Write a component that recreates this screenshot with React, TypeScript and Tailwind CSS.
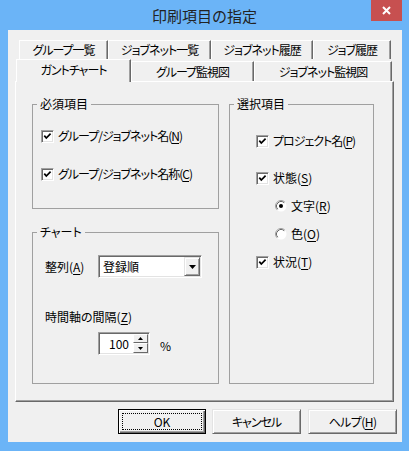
import React from "react";

function U({ c }: { c: string }) {
  return <span className="underline decoration-1 underline-offset-[2px]">{c}</span>;
}

function CheckBox() {
  return (
    <span className="w-[13px] h-[13px] shrink-0 bg-white border border-t-[#a0a0a0] border-l-[#a0a0a0] border-r-white border-b-white shadow-[inset_1px_1px_0_#696969,inset_-1px_-1px_0_#e3e3e3] flex items-center justify-center">
      <svg width="11" height="11" viewBox="0 0 11 11">
        <path d="M2.3 4.6 L4.3 7 L8.6 2.6" fill="none" stroke="#000" strokeWidth="1.7" />
      </svg>
    </span>
  );
}

function Radio({ on }: { on: boolean }) {
  return (
    <svg width="12" height="12" viewBox="0 0 12 12" className="shrink-0">
      <circle cx="6" cy="6" r="5.5" fill="#fff" />
      <path d="M2.11 9.89 A5.5 5.5 0 0 1 9.89 2.11" fill="none" stroke="#a0a0a0" strokeWidth="1" />
      <path d="M2.82 9.18 A4.5 4.5 0 0 1 9.18 2.82" fill="none" stroke="#696969" strokeWidth="1" />
      {on && <circle cx="6" cy="6" r="2" fill="#000" />}
    </svg>
  );
}

function Group({
  title,
  className,
  children,
}: {
  title: string;
  className: string;
  children?: React.ReactNode;
}) {
  return (
    <div className={"relative border border-[#a0a0a0] " + className}>
      <span className="absolute left-[4px] top-[-9px] px-[3px] bg-[#f0f0f0] leading-[16px]">{title}</span>
      {children}
    </div>
  );
}

function CheckRow({
  children,
  className,
  tight,
}: {
  children: React.ReactNode;
  className?: string;
  tight?: boolean;
}) {
  return (
    <div className={"flex items-center gap-[4px] h-[16px] leading-[16px] " + (className ?? "")}>
      <CheckBox />
      <span className={tight ? "tracking-[-1px]" : ""}>{children}</span>
    </div>
  );
}

export default function App() {
  return (
    <div className="w-[409px] h-[451px] bg-[#6bb4f7] flex flex-col font-['Noto_Sans_CJK_JP',sans-serif] text-[12px] text-black [font-feature-settings:'palt']">
      {/* title bar */}
      <div className="h-[30px] flex shrink-0">
        <div className="w-[38px]" />
        <div className="flex-1 text-center text-[15px] leading-[31px] text-[#222] [font-feature-settings:normal]">
          印刷項目の指定
        </div>
        <div className="w-[31px] h-[21px] mr-[7px] bg-[#c75050] flex items-center justify-center">
          <svg width="9" height="9" viewBox="0 0 9 9">
            <path d="M1 1 L8 8 M8 1 L1 8" stroke="#fff" strokeWidth="2" />
          </svg>
        </div>
      </div>

      {/* client */}
      <div className="ml-[8px] mr-[7px] h-[412px] bg-[#f0f0f0] flex flex-col pt-[10px]">
        <div className="ml-[7px] mr-[8px] flex flex-col">
          {/* back tab row */}
          <div className="flex h-[19px] ml-[4px] tracking-[-1px]">
            <div className="w-[89px] h-[19px] flex items-center justify-center border-l border-t border-white border-r border-r-[#696969] shadow-[inset_-1px_0_0_#a0a0a0]">
              グループ一覧
            </div>
            <div className="w-[103px] h-[19px] flex items-center justify-center border-l border-t border-white border-r border-r-[#696969] shadow-[inset_-1px_0_0_#a0a0a0]">
              ジョブネット一覧
            </div>
            <div className="w-[102px] h-[19px] flex items-center justify-center border-l border-t border-white border-r border-r-[#696969] shadow-[inset_-1px_0_0_#a0a0a0]">
              ジョブネット履歴
            </div>
            <div className="w-[78px] h-[19px] flex items-center justify-center border-l border-t border-white border-r border-r-[#696969] shadow-[inset_-1px_0_0_#a0a0a0]">
              ジョブ履歴
            </div>
          </div>
          {/* front tab row */}
          <div className="flex h-[22px] items-start ml-px relative z-10 tracking-[-1px]">
            <div className="w-[115px] h-[23px] bg-[#f0f0f0] flex items-center justify-center pb-[3px] border-l border-t border-white border-r border-r-[#696969] shadow-[inset_-1px_0_0_#a0a0a0]">
              ガントチャート
            </div>
            <div className="w-[123px] h-[20px] mt-[2px] flex items-center justify-center border-l border-t border-white border-r border-r-[#696969] shadow-[inset_-1px_0_0_#a0a0a0]">
              グループ監視図
            </div>
            <div className="w-[138px] h-[20px] mt-[2px] flex items-center justify-center border-l border-t border-white border-r border-r-[#696969] shadow-[inset_-1px_0_0_#a0a0a0]">
              ジョブネット監視図
            </div>
          </div>
          {/* panel */}
          <div className="h-[321px] border border-t-white border-l-white border-r-[#696969] border-b-[#696969] shadow-[inset_-1px_-1px_0_#a0a0a0] flex gap-[10px] pl-[16px] pt-[22px]">
            <div className="w-[187px] flex flex-col gap-[23px]">
              <Group title="必須項目" className="h-[105px] pl-[8px] pt-[23px] flex flex-col gap-[22px]">
                <CheckRow tight>
                  グループ/ジョブネット名(<U c="N" />)
                </CheckRow>
                <CheckRow tight>
                  グループ/ジョブネット名称(<U c="C" />)
                </CheckRow>
              </Group>
              <Group title="チャート" className="h-[152px] pl-[12px] pt-[22px] flex flex-col">
                <div className="flex items-center h-[23px]">
                  <span className="w-[53px] leading-[16px]">
                    整列(<U c="A" />)
                  </span>
                  <div className="w-[104px] h-[23px] bg-white border border-t-[#a0a0a0] border-l-[#a0a0a0] border-r-white border-b-white shadow-[inset_1px_1px_0_#696969,inset_-1px_-1px_0_#e3e3e3] flex items-center p-px">
                    <span className="flex-1 pl-[3px] leading-[16px]">登録順</span>
                    <div className="w-[16px] h-[19px] bg-[#f0f0f0] border border-t-[#e3e3e3] border-l-[#e3e3e3] border-r-[#696969] border-b-[#696969] shadow-[inset_1px_1px_0_#fff,inset_-1px_-1px_0_#a0a0a0] flex items-center justify-center">
                      <svg width="7" height="4" viewBox="0 0 7 4">
                        <path d="M0 0 H7 L3.5 4 Z" fill="#000" />
                      </svg>
                    </div>
                  </div>
                </div>
                <div className="mt-[31px] h-[16px] leading-[16px]">
                  時間軸の間隔(<U c="Z" />)
                </div>
                <div className="mt-[7px] ml-[53px] flex items-center">
                  <div className="w-[52px] h-[23px] bg-white border border-t-[#a0a0a0] border-l-[#a0a0a0] border-r-white border-b-white shadow-[inset_1px_1px_0_#696969,inset_-1px_-1px_0_#e3e3e3] flex items-stretch p-px">
                    <span className="flex-1 text-right pr-[4px] leading-[19px] [font-feature-settings:normal]">100</span>
                    <div className="w-[15px] flex flex-col">
                      <div className="h-[9px] bg-[#f0f0f0] border border-t-white border-l-white border-r-[#696969] border-b-[#696969] flex items-center justify-center">
                        <svg width="5" height="3" viewBox="0 0 5 3">
                          <path d="M0 3 H5 L2.5 0 Z" fill="#000" />
                        </svg>
                      </div>
                      <div className="h-[10px] bg-[#f0f0f0] border border-t-white border-l-white border-r-[#696969] border-b-[#696969] flex items-center justify-center">
                        <svg width="5" height="3" viewBox="0 0 5 3">
                          <path d="M0 0 H5 L2.5 3 Z" fill="#000" />
                        </svg>
                      </div>
                    </div>
                  </div>
                  <span className="ml-[10px] pt-[4px] leading-[16px]">%</span>
                </div>
              </Group>
            </div>
            <Group title="選択項目" className="w-[145px] h-[280px] pl-[26px] pt-[28px] flex flex-col">
              <CheckRow tight>
                プロジェクト名(<U c="P" />)
              </CheckRow>
              <CheckRow className="mt-[21px]">
                状態(<U c="S" />)
              </CheckRow>
              <div className="mt-[12px] ml-[19px] flex items-center gap-[4px] h-[16px] leading-[16px]">
                <Radio on={true} />
                <span>
                  文字(<U c="R" />)
                </span>
              </div>
              <div className="mt-[12px] ml-[19px] flex items-center gap-[4px] h-[16px] leading-[16px]">
                <Radio on={false} />
                <span>
                  色(<U c="O" />)
                </span>
              </div>
              <CheckRow className="mt-[12px]">
                状況(<U c="T" />)
              </CheckRow>
            </Group>
          </div>
        </div>

        {/* buttons */}
        <div className="flex justify-end mt-[7px] pr-[5px]">
          <div className="relative w-[88px] h-[25px] bg-[#f0f0f0] border border-black shadow-[inset_1px_1px_0_#fff,inset_-1px_-1px_0_#696969,inset_-2px_-2px_0_#a0a0a0] flex items-center justify-center outline outline-1 outline-dotted outline-black outline-offset-[-5px]">
            OK
          </div>
          <div className="ml-[6px] w-[89px] h-[25px] bg-[#f0f0f0] border border-t-[#e3e3e3] border-l-[#e3e3e3] border-r-[#696969] border-b-[#696969] shadow-[inset_1px_1px_0_#fff,inset_-1px_-1px_0_#a0a0a0] flex items-center justify-center tracking-[-1px]">
            キャンセル
          </div>
          <div className="ml-[7px] w-[89px] h-[25px] bg-[#f0f0f0] border border-t-[#e3e3e3] border-l-[#e3e3e3] border-r-[#696969] border-b-[#696969] shadow-[inset_1px_1px_0_#fff,inset_-1px_-1px_0_#a0a0a0] flex items-center justify-center tracking-[-0.6px]">
            ヘルプ(<U c="H" />)
          </div>
        </div>
      </div>
    </div>
  );
}
